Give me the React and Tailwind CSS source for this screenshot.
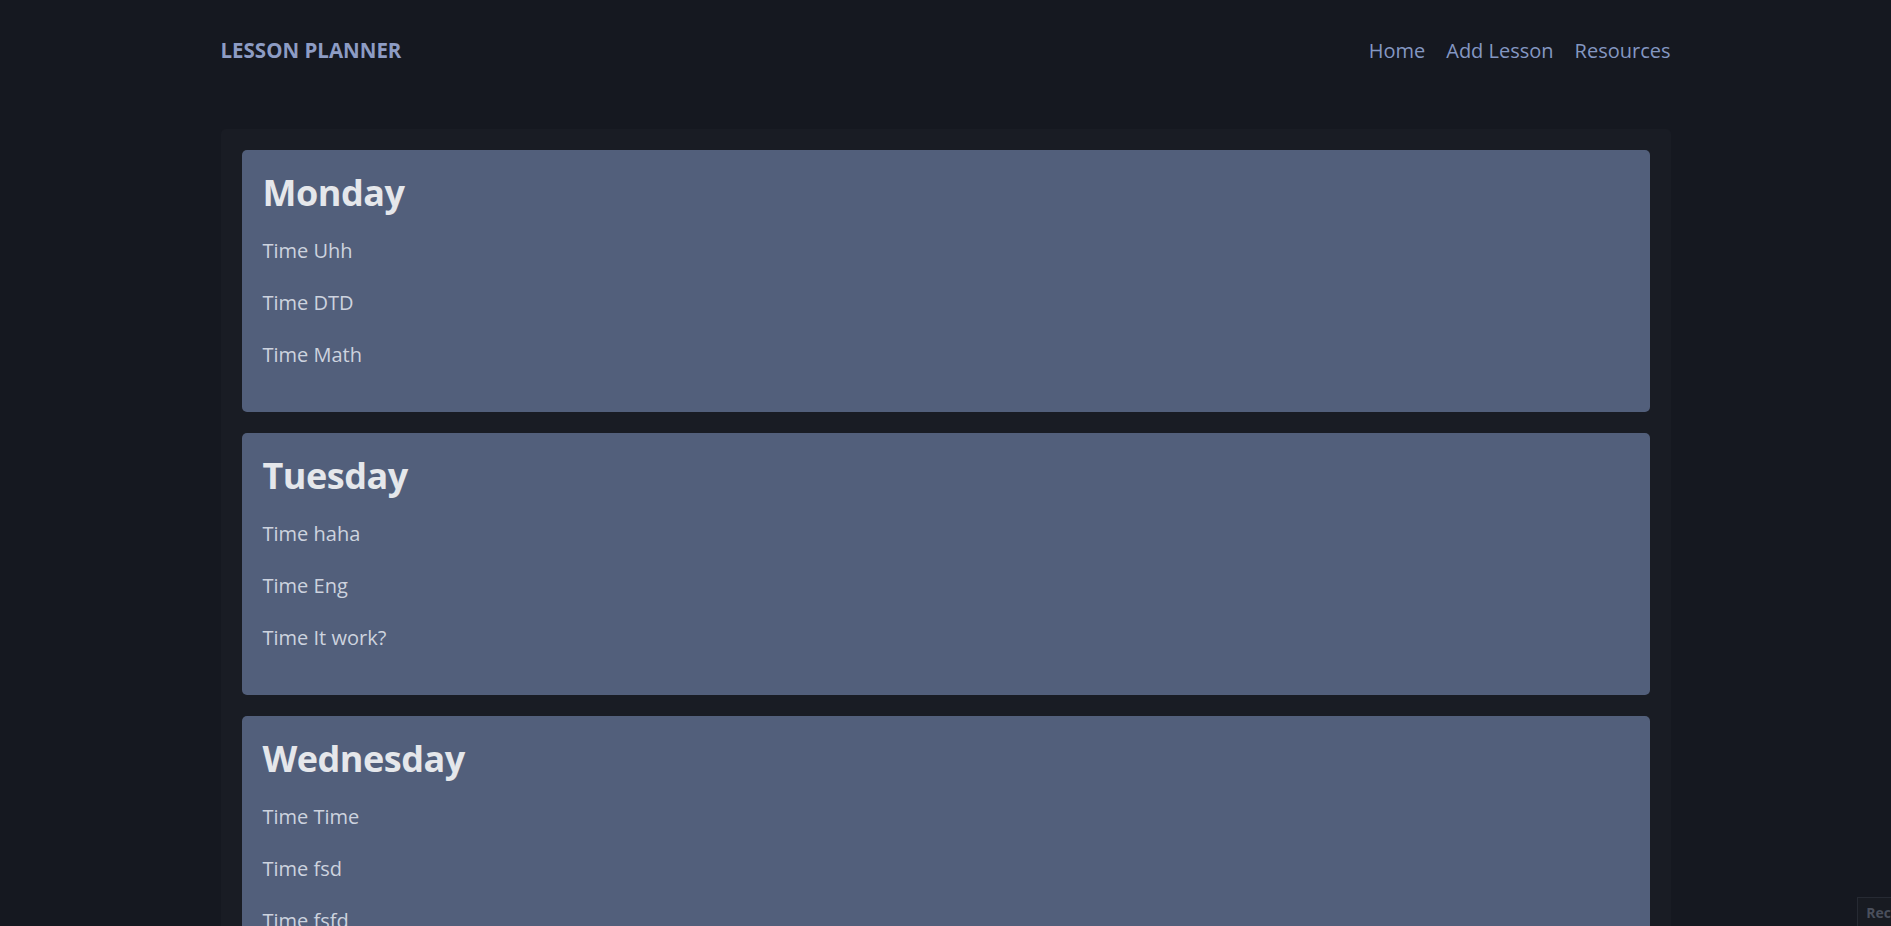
// App.jsx
// Lesson planner — weekly overview, dark slate theme

const days = [
  { name: "Monday", lessons: ["Uhh", "DTD", "Math"] },
  { name: "Tuesday", lessons: ["haha", "Eng", "It work?"] },
  { name: "Wednesday", lessons: ["Time", "fsd", "fsfd"] },
  { name: "Thursday", lessons: ["Sci", "Art", "PE"] },
];

function DayCard({ day }) {
  return (
    <div className="rounded-[5px] bg-[#525f7b] px-[21px] pt-[21px] pb-[42px]">
      <h2 className="mb-[21px] text-[36px] leading-[43px] font-bold tracking-[-0.5px] text-[#e5e7eb]">{day.name}</h2>
      <div className="flex flex-col gap-[21px]">
        {day.lessons.map((lesson, i) => (
          <p key={i} className="text-[20px] leading-[31px] text-[#cdd3df]">
            Time {lesson}
          </p>
        ))}
      </div>
    </div>
  );
}

export default function App() {
  return (
    <div
      className="h-screen overflow-hidden bg-[#151820]"
      style={{ fontFamily: '"Open Sans", "Noto Sans", sans-serif' }}
    >
      {/* Top nav */}
      <nav className="mx-auto flex h-[101px] w-[1450px] items-center justify-between">
        <span className="text-[20.5px] font-bold text-[#8d9cc4]">LESSON PLANNER</span>
        <div className="flex items-center gap-[21px] text-[20px] text-[#8497c2]">
          <span>Home</span>
          <span>Add Lesson</span>
          <span>Resources</span>
        </div>
      </nav>

      {/* Week overview */}
      <main className="mx-auto mt-[28px] flex w-[1450px] flex-col gap-[21px] rounded-[5px] bg-[#191c24] p-[21px]">
        {days.map((day) => (
          <DayCard key={day.name} day={day} />
        ))}
      </main>

      {/* cut-off badge in the corner */}
      <div className="fixed right-[-50px] bottom-[-10px] border border-[#262a33] bg-[#181b22] px-[8px] pt-[4px] pb-[12px] text-[14px] font-bold text-[#4a4f5c]">
        Recorded
      </div>
    </div>
  );
}
